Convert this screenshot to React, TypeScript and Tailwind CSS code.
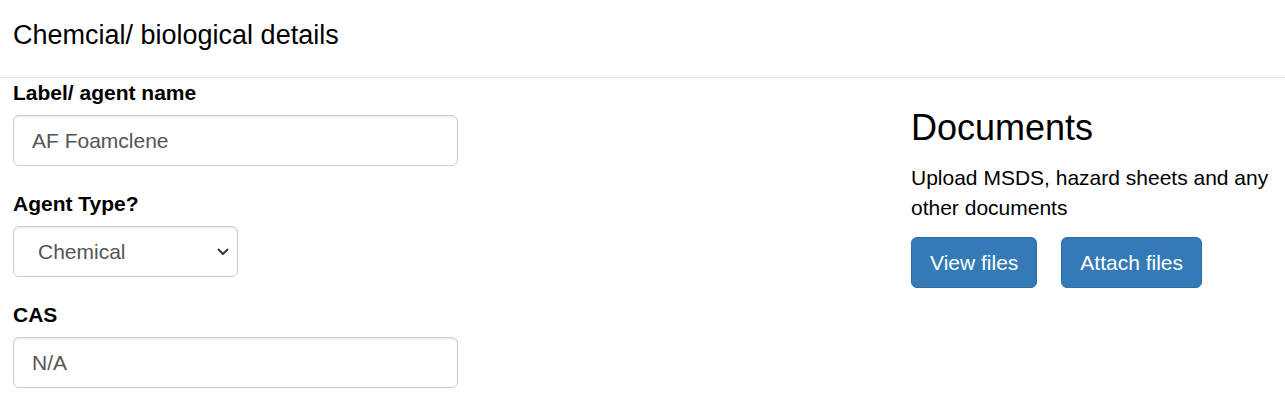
import React from 'react';

const font = { fontFamily: '"Liberation Sans", Arial, Helvetica, sans-serif' };

function Field({ label, children }: { label: string; children: React.ReactNode }) {
  return (
    <div className="mb-[23px]">
      <label className="mb-[7px] block text-[21px] font-bold leading-[30px] text-[#000]">{label}</label>
      {children}
    </div>
  );
}

const inputCls =
  'block h-[51px] w-full rounded-[6px] border border-[#ccc] bg-white px-[18px] text-[21px] text-[#555] shadow-[inset_0_1.5px_1.5px_rgba(0,0,0,0.075)] outline-none';

export default function App() {
  return (
    <div className="h-[406px] w-[1285px] overflow-hidden bg-white text-[#000]" style={font}>
      <div className="border-b border-[#e5e5e5] pb-[27px] pl-[13px] pt-[21px]">
        <h4 className="text-[27px] font-normal leading-[29px]">Chemcial/ biological details</h4>
      </div>

      <div className="flex">
        <div className="ml-[13px] w-[445px]">
          <Field label="Label/ agent name">
            <input className={inputCls} defaultValue="AF Foamclene" />
          </Field>
          <Field label="Agent Type?">
            <div className="relative w-[225px]">
              <select
                className={`${inputCls} appearance-none pl-[24px]`}
                defaultValue="Chemical"
              >
                <option>Chemical</option>
                <option>Biological</option>
              </select>
              <svg
                className="pointer-events-none absolute right-[9px] top-[22px]"
                width="12"
                height="8"
                viewBox="0 0 12 8"
                fill="none"
              >
                <path d="M1.5 1.5 L6 6 L10.5 1.5" stroke="#333" strokeWidth="1.8" strokeLinecap="round" strokeLinejoin="round" />
              </svg>
            </div>
          </Field>
          <Field label="CAS">
            <input className={inputCls} defaultValue="N/A" />
          </Field>
        </div>

        <div className="ml-auto w-[374px]">
          <h3 className="mt-[30px] mb-[15px] text-[36px] font-normal leading-[40px]">Documents</h3>
          <p className="mb-[14px] text-[21px] leading-[30px]">
            Upload MSDS, hazard sheets and any other documents
          </p>
          <div className="flex gap-[24px]">
            <button className="h-[51px] rounded-[6px] border border-[#2e6da4] bg-[#337ab7] px-[18px] text-[21px] text-white">
              View files
            </button>
            <button className="h-[51px] rounded-[6px] border border-[#2e6da4] bg-[#337ab7] px-[18px] text-[21px] text-white">
              Attach files
            </button>
          </div>
        </div>
      </div>
    </div>
  );
}
